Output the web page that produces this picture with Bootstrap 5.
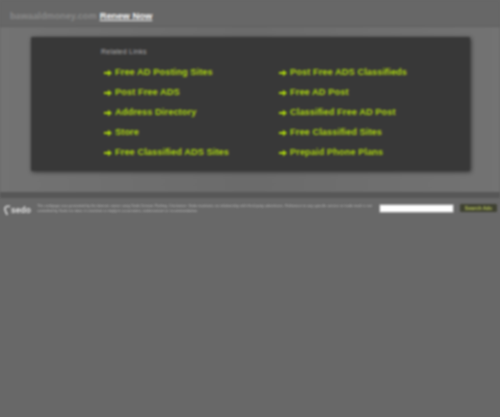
<!doctype html>
<html lang="en"><head><meta charset="utf-8"><title>Related Links</title>
<link href="https://cdn.jsdelivr.net/npm/bootstrap@5.3.0/dist/css/bootstrap.min.css" rel="stylesheet">
<style>
html,body{height:100%;margin:0;overflow:hidden}
body{background:#686868;font-family:"Liberation Sans",Arial,sans-serif}
.blurwrap{filter:blur(.9px);height:417px}
.topbar{height:27px;background:#676767;border-bottom:1px solid #5e5e5e;padding:7px 0 0 10px;gap:3px;font-size:9.2px;font-weight:700}
.domain{color:#8a8a8a}
.renew{color:#f8f8f8;font-size:9.4px;text-decoration:underline}
.midzone{height:165px;background:linear-gradient(90deg,#737373,#6b6b6b 50%,#737373);padding:10px 30px 0 31px}
.panelbox{height:134px;background:#383838;box-shadow:1px 1px 4px #2f2f2f;border-radius:1px;padding:10px 0 0 70px}
.rel-title{font-size:7px;color:#b0b0b0;letter-spacing:.25px;line-height:10px;margin-bottom:6px}
.linkgrid{display:grid;grid-template-columns:175px 1fr;grid-auto-rows:20px}
.linkitem{color:#a8d20e;font-size:9.2px;font-weight:700;gap:3px;letter-spacing:.1px;padding-left:3px;text-decoration:none}
.linkitem svg{width:8px;height:8px;flex:none}
.sepband{height:6px;background:#575757}
.footzone{padding:6px 4px 0 4px;height:24px}
.sedobox{width:33px;height:18px;flex:none;gap:0}
.sedobox svg{width:7px;height:12px;flex:none}
.sedomark{color:#e2e2e2;font-size:8.5px;font-weight:700;line-height:12px}
.disclaimer{font-size:3.7px;line-height:5px;color:#bcbcbc;width:338px;flex:none}
.searchfield{width:75px;height:9px;background:#fff;border:1px solid #8a8a8a;flex:none;margin-left:4px}
.searchbtn{width:37px;height:8px;background:#3f4132;color:#b4c058;font-size:5px;line-height:8px;text-align:center;flex:none;margin-left:6px;border-radius:1px;font-weight:700}
</style></head><body>
<div class="blurwrap">
<div class="topbar d-flex align-items-center"><span class="domain">bawaaldmoney.com</span><span class="renew">Renew Now</span></div>
<div class="midzone"><div class="panelbox">
<div class="rel-title">Related Links</div>
<div class="linkgrid">
<a class="linkitem d-flex align-items-center" href="#"><svg viewBox="0 0 8 8"><path d="M0 3h4V.8L8 4 4 7.2V5H0z" fill="#a8d20e"/></svg>Free AD Posting Sites</a>
<a class="linkitem d-flex align-items-center" href="#"><svg viewBox="0 0 8 8"><path d="M0 3h4V.8L8 4 4 7.2V5H0z" fill="#a8d20e"/></svg>Post Free ADS Classifieds</a>
<a class="linkitem d-flex align-items-center" href="#"><svg viewBox="0 0 8 8"><path d="M0 3h4V.8L8 4 4 7.2V5H0z" fill="#a8d20e"/></svg>Post Free ADS</a>
<a class="linkitem d-flex align-items-center" href="#"><svg viewBox="0 0 8 8"><path d="M0 3h4V.8L8 4 4 7.2V5H0z" fill="#a8d20e"/></svg>Free AD Post</a>
<a class="linkitem d-flex align-items-center" href="#"><svg viewBox="0 0 8 8"><path d="M0 3h4V.8L8 4 4 7.2V5H0z" fill="#a8d20e"/></svg>Address Directory</a>
<a class="linkitem d-flex align-items-center" href="#"><svg viewBox="0 0 8 8"><path d="M0 3h4V.8L8 4 4 7.2V5H0z" fill="#a8d20e"/></svg>Classified Free AD Post</a>
<a class="linkitem d-flex align-items-center" href="#"><svg viewBox="0 0 8 8"><path d="M0 3h4V.8L8 4 4 7.2V5H0z" fill="#a8d20e"/></svg>Store</a>
<a class="linkitem d-flex align-items-center" href="#"><svg viewBox="0 0 8 8"><path d="M0 3h4V.8L8 4 4 7.2V5H0z" fill="#a8d20e"/></svg>Free Classified Sites</a>
<a class="linkitem d-flex align-items-center" href="#"><svg viewBox="0 0 8 8"><path d="M0 3h4V.8L8 4 4 7.2V5H0z" fill="#a8d20e"/></svg>Free Classified ADS Sites</a>
<a class="linkitem d-flex align-items-center" href="#"><svg viewBox="0 0 8 8"><path d="M0 3h4V.8L8 4 4 7.2V5H0z" fill="#a8d20e"/></svg>Prepaid Phone Plans</a>
</div></div></div>
<div class="sepband"></div>
<div class="footzone d-flex align-items-start">
<div class="sedobox d-flex align-items-start"><svg viewBox="0 0 7 12"><path d="M6 2.5C2.5 1.5.6 3 1 5.5c.3 2.5 2 3.500 2 5.500" fill="none" stroke="#dcdcdc" stroke-width="1.600"/></svg><span class="sedomark">sedo</span></div>
<div class="disclaimer">This webpage was generated by the domain owner using Sedo Domain Parking. Disclaimer: Sedo maintains no relationship with third party advertisers. Reference to any specific service or trade mark is not controlled by Sedo nor does it constitute or imply its association, endorsement or recommendation.</div>
<div class="searchfield"></div><div class="searchbtn">Search Ads</div>
</div>
</div>
</body></html>
